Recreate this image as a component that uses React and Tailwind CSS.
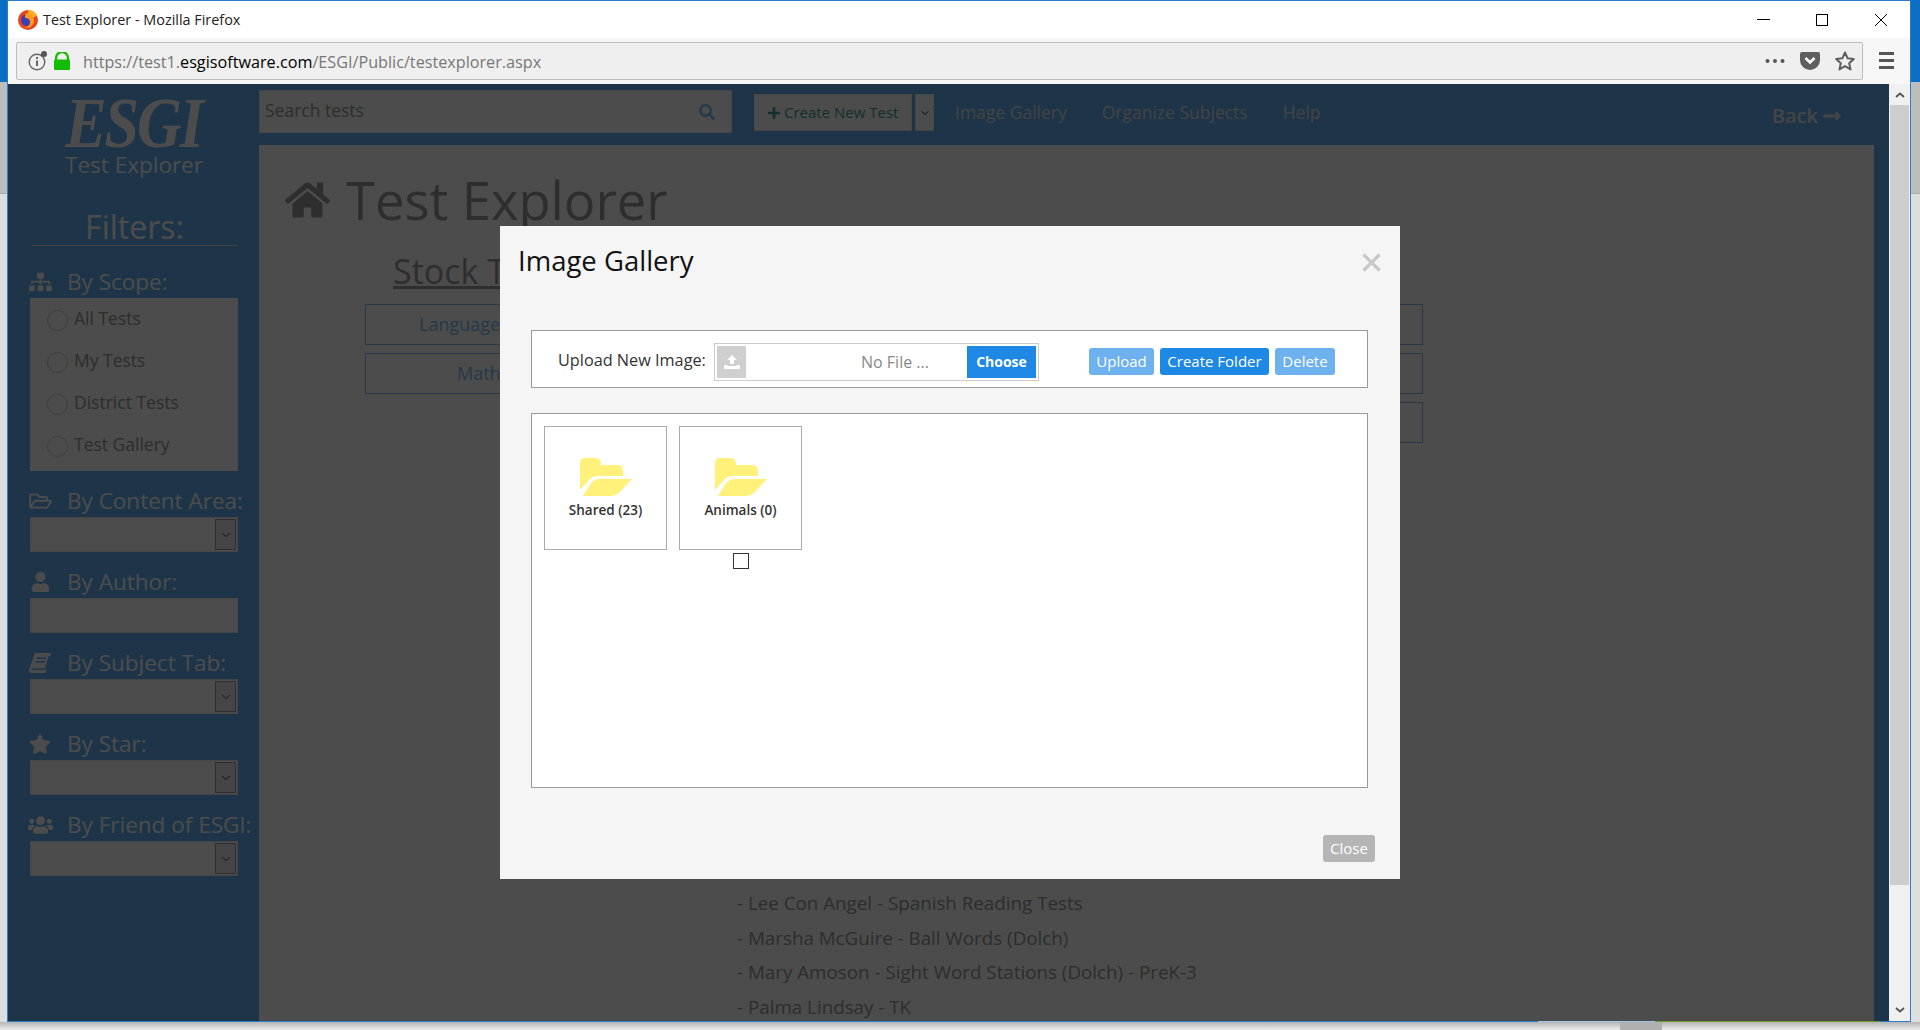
import { ChevronDown } from "lucide-react";
import {
  FaHome,
  FaLongArrowAltRight,
  FaPlus,
  FaRegFolderOpen,
  FaSearch,
  FaSitemap,
  FaStar,
  FaUser,
  FaUsers,
} from "react-icons/fa";

const FONT = "font-['Open_Sans',sans-serif]";

const FirefoxLogo = () => (
  <svg viewBox="0 0 20 20" className="w-5 h-5">
    <circle cx="10" cy="10" r="10" fill="#e8421f" />
    <path d="M10 0a10 10 0 0 1 9 6l-5 2-4-3z" fill="#ffb21e" />
    <circle cx="9" cy="10" r="6" fill="#3b3fb6" />
    <path d="M8 3c5 0 9 4 8 9s-6 7-10 5c4 0 6-2 6-5s-2-4-5-4c0-2 0-3 1-5z" fill="#ff9a1f" />
  </svg>
);

const ScrollArrow = ({ up }) => (
  <svg viewBox="0 0 10 6" className="w-[10px] h-[6px]">
    <path
      d={up ? "M1 5 5 1.5 9 5" : "M1 1 5 4.5 9 1"}
      fill="none"
      stroke="#555"
      strokeWidth="1.8"
    />
  </svg>
);

const FolderIcon = () => (
  <svg viewBox="0 0 52 39" className="w-[52px] h-[39px]">
    <path
      d="M0 5Q0 0 5 0H15Q21 0 21 6V7H37Q43 7 43 13V18H17Q13 18 10 21L0 32Z"
      fill="#fff17a"
    />
    <path d="M11 25Q15 21 19 21H52L41 33Q36 38 30 38H3Z" fill="#fff17a" />
  </svg>
);

const BookIcon = () => (
  <svg viewBox="0 0 22 20" className="w-[22px] h-[20px]">
    <path
      fillRule="evenodd"
      fill="#fff"
      d="M6 0H22L18 15Q17 17 15 17H4Q2 17 2.500 15.500H16L19.500 3 21 3.500 17 18.500Q16.500 20 14 20H3Q0 20 0 17ZM8 4.500 7.600 6H17L17.400 4.500ZM7 8 6.600 9.500H16L16.400 8Z"
    />
  </svg>
);

const FilterSelect = () => (
  <div className="h-[35px] border border-[#e6e6e6] bg-white flex justify-end items-stretch p-px">
    <div className="w-[21px] border border-[#999] bg-[#e8e8e8] flex items-center justify-center">
      <ChevronDown className="w-3.5 h-3.5 text-[#222]" strokeWidth={1.5} />
    </div>
  </div>
);

const FilterGroup = ({ icon, label, children }) => (
  <div className="mb-[15px]">
    <div className="h-[30px] mb-px flex items-center text-white text-[22.500px] whitespace-nowrap">
      <span className="w-[38px] -ml-[4px] shrink-0 flex justify-center pr-[10px]">{icon}</span>
      <span className="ml-[3px]">{label}</span>
    </div>
    {children}
  </div>
);

const ScopeRadio = ({ label }) => (
  <div className="h-[42px] flex items-center pl-[17px] text-[#999] text-[17.500px]">
    <span className="mt-[2px] w-[21px] h-[21px] rounded-full border border-[#ccc] bg-white shrink-0" />
    <span className="ml-[6px] -mt-[2px]">{label}</span>
  </div>
);

const Sidebar = () => (
  <aside className="w-[251px] shrink-0 pt-[8px]">
    <div className="h-[62px] flex items-center justify-center text-white font-['Liberation_Serif',serif] font-bold italic text-[62px] leading-[50px] tracking-[-2px] scale-y-[1.15]">
      ESGI
    </div>
    <div className="-mt-[2px] text-center text-white text-[22.500px] leading-[26px] pl-[1px]">
      Test Explorer
    </div>
    <div className="ml-[24px] w-[205px] mt-[29px] h-[39px] border-b border-[#ddd] text-center text-white text-[32px] leading-[40px]">
      Filters:
    </div>
    <div className="mt-[21px] pl-[22px] w-[230px]">
      <FilterGroup icon={<FaSitemap className="w-[23px] h-[20px]" />} label="By Scope:">
        <div className="h-[173px] bg-white">
          <ScopeRadio label="All Tests" />
          <ScopeRadio label="My Tests" />
          <ScopeRadio label="District Tests" />
          <ScopeRadio label="Test Gallery" />
        </div>
      </FilterGroup>
      <FilterGroup icon={<FaRegFolderOpen className="w-[25px] h-[20px]" />} label="By Content Area:">
        <FilterSelect />
      </FilterGroup>
      <FilterGroup icon={<FaUser className="w-[19px] h-[20px]" />} label="By Author:">
        <div className="h-[35px] border border-[#e6e6e6] bg-white" />
      </FilterGroup>
      <FilterGroup icon={<BookIcon />} label="By Subject Tab:">
        <FilterSelect />
      </FilterGroup>
      <FilterGroup icon={<FaStar className="w-[22px] h-[20px]" />} label="By Star:">
        <FilterSelect />
      </FilterGroup>
      <FilterGroup icon={<FaUsers className="w-[25px] h-[22px]" />} label="By Friend of ESGI:">
        <FilterSelect />
      </FilterGroup>
    </div>
  </aside>
);

const TopBar = () => (
  <div className="h-[61px] shrink-0 flex items-start text-white">
    <div className="mt-[6px] w-[473px] h-[43px] bg-white border border-[#e6e6e6] flex items-center justify-between pl-[5px] pr-[16px]">
      <span className="text-[#999] text-[17.500px] -mt-[3px]">Search tests</span>
      <FaSearch className="w-[16px] h-[16px] text-[#7fc4ff]" />
    </div>
    <div className="mt-[10px] ml-[22px] w-[158px] h-[37px] bg-white border border-[#e6e6e6] flex items-center pl-[12px] text-[#3f9e9e] text-[15px]">
      <FaPlus className="w-[14px] h-[14px] mr-[3px]" />
      <span>Create New Test</span>
    </div>
    <div className="mt-[10px] ml-[3px] w-[19px] h-[37px] bg-white border border-[#e6e6e6] flex items-center justify-center">
      <ChevronDown className="w-3 h-3 text-[#111]" strokeWidth={2} />
    </div>
    <div className="ml-[21px] h-[56px] flex items-center gap-[35px] text-[17.500px] text-[#e2e2e2]">
      <span>Image Gallery</span>
      <span>Organize Subjects</span>
      <span>Help</span>
    </div>
    <div className="ml-auto mr-[30px] h-[64px] flex items-center gap-[2px] text-[20px] font-semibold text-[#e8e8e8]">
      <span>Back</span>
      <FaLongArrowAltRight className="w-[24px] h-[20px]" />
    </div>
  </div>
);

const SubjectBox = ({ label, pad }) => (
  <div className={`h-[41px] border border-[#7fbdf5] text-[#7fbdf5] text-[18px] flex items-center ${pad}`}>
    {label}
  </div>
);

const MainPanel = () => (
  <div className="flex-1 bg-white text-[#999] overflow-hidden">
    <div className="mt-[30px] ml-[25px] h-[50px] flex items-center gap-[15px]">
      <FaHome className="w-[47px] h-[40px]" />
      <span className="text-[52.500px] leading-none">Test Explorer</span>
    </div>
    <div className="mt-[23px] ml-[134px] text-[34px] leading-[46px] underline whitespace-nowrap">
      Stock Tests
    </div>
    <div className="mt-[10px] ml-[106px] w-[1058px] flex justify-between">
      <div className="w-[343px] flex flex-col gap-2">
        <SubjectBox label="Language Arts" pad="pl-[53px]" />
        <SubjectBox label="Math" pad="pl-[91px]" />
      </div>
      <div className="w-[343px] flex flex-col gap-2">
        <SubjectBox label="" pad="" />
        <SubjectBox label="" pad="" />
        <SubjectBox label="" pad="" />
      </div>
    </div>
    <div className="mt-[443px] ml-[478px] text-[18.800px] leading-[34.500px]">
      <div>- Lee Con Angel - Spanish Reading Tests</div>
      <div>- Marsha McGuire - Ball Words (Dolch)</div>
      <div>- Mary Amoson - Sight Word Stations (Dolch) - PreK-3</div>
      <div>- Palma Lindsay - TK</div>
    </div>
  </div>
);

const FolderTile = ({ label }) => (
  <div className="w-[123px] h-[124px] border border-[#aaa] flex flex-col items-center pt-[31px]">
    <FolderIcon />
    <div className="mt-[3px] text-[13.500px] font-semibold text-[#333] leading-[20px]">{label}</div>
  </div>
);

const GalleryModal = () => (
  <div className="absolute left-[492px] top-[142px] w-[900px] h-[653px] bg-[#f5f5f5] flex flex-col px-[31px]">
    <div className="h-[104px] shrink-0 -ml-[13px] -mr-[12px] flex items-start justify-between">
      <span className="mt-[16px] text-[27.500px] leading-[38px] text-[#111]">Image Gallery</span>
      <svg viewBox="0 0 19 19" className="mt-[27px] w-[19px] h-[19px]">
        <path d="M1.500 1.500 17.500 17.500M17.500 1.500 1.500 17.500" stroke="#c8c8c8" strokeWidth="3.200" />
      </svg>
    </div>
    <div className="w-[837px] h-[58px] shrink-0 border border-[#999] bg-white flex items-center pl-[26px]">
      <span className="mt-[2px] w-[156px] shrink-0 text-[16.250px] text-[#333] whitespace-nowrap">Upload New Image:</span>
      <div className="mt-[5px] w-[325px] h-[38px] border border-[#ccc] flex items-center p-[2px]">
        <div className="w-[29px] h-[32px] bg-[#cfcfcf] flex items-center justify-center">
          <svg viewBox="0 0 16 14" className="w-4 h-[14px]">
            <path d="M8 0 13 5H10V9H6V5H3ZM0 10H4V11H12V10H16V14H0Z" fill="#fff" />
          </svg>
        </div>
        <span className="ml-[115px] text-[16px] text-[#888] whitespace-nowrap">No File ...</span>
        <button className="ml-auto w-[69px] h-[32px] bg-[#1e88e5] text-white text-[14px] font-bold">
          Choose
        </button>
      </div>
      <div className="mt-[5px] ml-[50px] flex gap-[6px] text-white text-[15px]">
        <button className="w-[65px] h-[27px] rounded-[3px] bg-[#6db1ee]">Upload</button>
        <button className="w-[109px] h-[27px] rounded-[3px] bg-[#1e88e5]">Create Folder</button>
        <button className="w-[60px] h-[27px] rounded-[3px] bg-[#6db1ee]">Delete</button>
      </div>
    </div>
    <div className="mt-[25px] w-[837px] h-[375px] shrink-0 border border-[#999] bg-white flex gap-3 pl-[12px] pt-[12px]">
      <FolderTile label="Shared (23)" />
      <div className="flex flex-col items-center">
        <FolderTile label="Animals (0)" />
        <span className="mt-[3px] w-4 h-4 border border-[#333]" />
      </div>
    </div>
    <div className="flex-1 flex justify-end items-start pt-[47px] -mr-[6px]">
      <button className="w-[52px] h-[27px] rounded-[3px] bg-[#b5b5b5] text-white text-[15px]">Close</button>
    </div>
  </div>
);

const AddressBar = () => (
  <div className="h-[46px] shrink-0 bg-[#f7f7f7] flex items-start pt-[4px] pl-[8px] pr-[16px]">
    <div className="flex-1 h-[38px] border border-[#bdbdbd] rounded-[2px] bg-[#efefef] flex items-center pl-[11px] pr-[6px]">
      <svg viewBox="0 0 20 20" className="w-[20px] h-[20px]">
        <circle cx="9" cy="11" r="7.800" fill="none" stroke="#666" strokeWidth="1.400" />
        <circle cx="16" cy="3" r="3" fill="#555" />
        <rect x="8" y="9.500" width="2" height="5.500" fill="#666" />
        <rect x="8" y="6" width="2" height="2" fill="#666" />
      </svg>
      <svg viewBox="0 0 16 18" className="ml-[6px] w-4 h-[18px]">
        <path d="M2 8V6a6 6 0 0 1 12 0v2" fill="none" stroke="#12bc00" strokeWidth="2.400" />
        <rect y="7.500" width="16" height="10.500" rx="1.500" fill="#12bc00" />
      </svg>
      <span className="ml-[13px] mt-[3px] text-[16.200px] text-[#777] whitespace-nowrap">
        https://test1.<span className="text-black">esgisoftware.com</span>/ESGI/Public/testexplorer.aspx
      </span>
      <svg viewBox="0 0 20 4" className="ml-auto w-[20px] h-[4px]">
        <circle cx="2.500" cy="2" r="2" fill="#555" />
        <circle cx="10" cy="2" r="2" fill="#555" />
        <circle cx="17.500" cy="2" r="2" fill="#555" />
      </svg>
      <svg viewBox="0 0 20 18" className="ml-[15px] w-[20px] h-[18px]">
        <path d="M2 0H18Q20 0 20 2V8A10 10 0 0 1 0 8V2Q0 0 2 0Z" fill="#5f5f5f" />
        <path d="M5.500 6 10 10.500 14.500 6" fill="none" stroke="#fff" strokeWidth="2.600" />
      </svg>
      <svg viewBox="0 0 20 20" className="ml-[15px] mr-[1px] w-[20px] h-[20px]">
        <path
          d="M10 1.500 12.600 7.300 18.800 8 14.200 12.200 15.500 18.400 10 15.200 4.500 18.400 5.800 12.200 1.200 8 7.400 7.300Z"
          fill="none"
          stroke="#5f5f5f"
          strokeWidth="2"
          strokeLinejoin="round"
        />
      </svg>
    </div>
    <div className="ml-[16px] mt-[10px] w-[15px] flex flex-col gap-[4px]">
      <span className="h-[3px] bg-[#555]" />
      <span className="h-[3px] bg-[#555]" />
      <span className="h-[3px] bg-[#555]" />
    </div>
  </div>
);

const TitleBar = () => (
  <div className="h-[37px] shrink-0 bg-white flex items-center pl-[10px]">
    <FirefoxLogo />
    <span className="ml-[5px] text-[14.400px] text-[#222]">Test Explorer - Mozilla Firefox</span>
    <div className="ml-auto flex items-center pr-[23px]">
      <span className="w-[13px] h-px bg-black" />
      <span className="ml-[46px] w-[12px] h-[12px] border border-black" />
      <svg viewBox="0 0 12 12" className="ml-[47px] w-[12px] h-[12px]">
        <path d="M0 0 12 12M12 0 0 12" stroke="#000" strokeWidth="1" />
      </svg>
    </div>
  </div>
);

// desktop behind the maximised window, only a few pixels of it show
const DesktopStrip = ({ side }) => (
  <div className={`${side} shrink-0 flex flex-col`}>
    <div className="h-[82px] bg-[#0a6fc2]" />
    <div className="h-[111px] bg-[#bdbdbd]" />
    <div className="flex-1 bg-[#dedede] border-t border-[#aaa]" />
  </div>
);

const App = () => {
  return (
    <div className={`${FONT} w-[1920px] h-[1030px] overflow-hidden bg-[#e6e6e6] flex flex-col`}>
      <div className="h-[1022px] flex">
        <DesktopStrip side="w-[7px]" />
        <div className="flex-1 min-w-0 flex flex-col border-x border-t border-[#2a80cc] bg-white">
          <TitleBar />
          <AddressBar />
          <div className="flex-1 flex min-h-0">
            <div className="flex-1 relative overflow-hidden flex bg-[#67b1f3]">
              <Sidebar />
              <div className="flex-1 flex flex-col pr-[15px] min-w-0">
                <TopBar />
                <MainPanel />
              </div>
              {/* modal backdrop */}
              <div className="absolute inset-0 bg-black/70" />
              <GalleryModal />
            </div>
            <div className="w-[21px] shrink-0 bg-[#f0f0f0] flex flex-col">
              <div className="h-[21px] flex items-center justify-center">
                <ScrollArrow up />
              </div>
              <div className="h-[780px] mx-px bg-[#cdcdcd]" />
              <div className="flex-1 flex items-end justify-center pb-[8px]">
                <ScrollArrow />
              </div>
            </div>
          </div>
          <div className="h-px shrink-0 flex">
            <div className="flex-1 bg-[#2a80cc]" />
            <div className="w-[117px] bg-[#9cc4ea]" />
            <div className="w-[225px] bg-[#6f9e2e]" />
            <div className="w-[30px] bg-[#2a80cc]" />
          </div>
        </div>
        <DesktopStrip side="w-[9px]" />
      </div>
      <div className="flex-1 bg-gradient-to-b from-[#b5b5b5] to-[#ececec] flex justify-end pr-[258px]">
        <div className="w-[42px] bg-[#b0b0b0]" />
      </div>
    </div>
  );
};

export default App;
